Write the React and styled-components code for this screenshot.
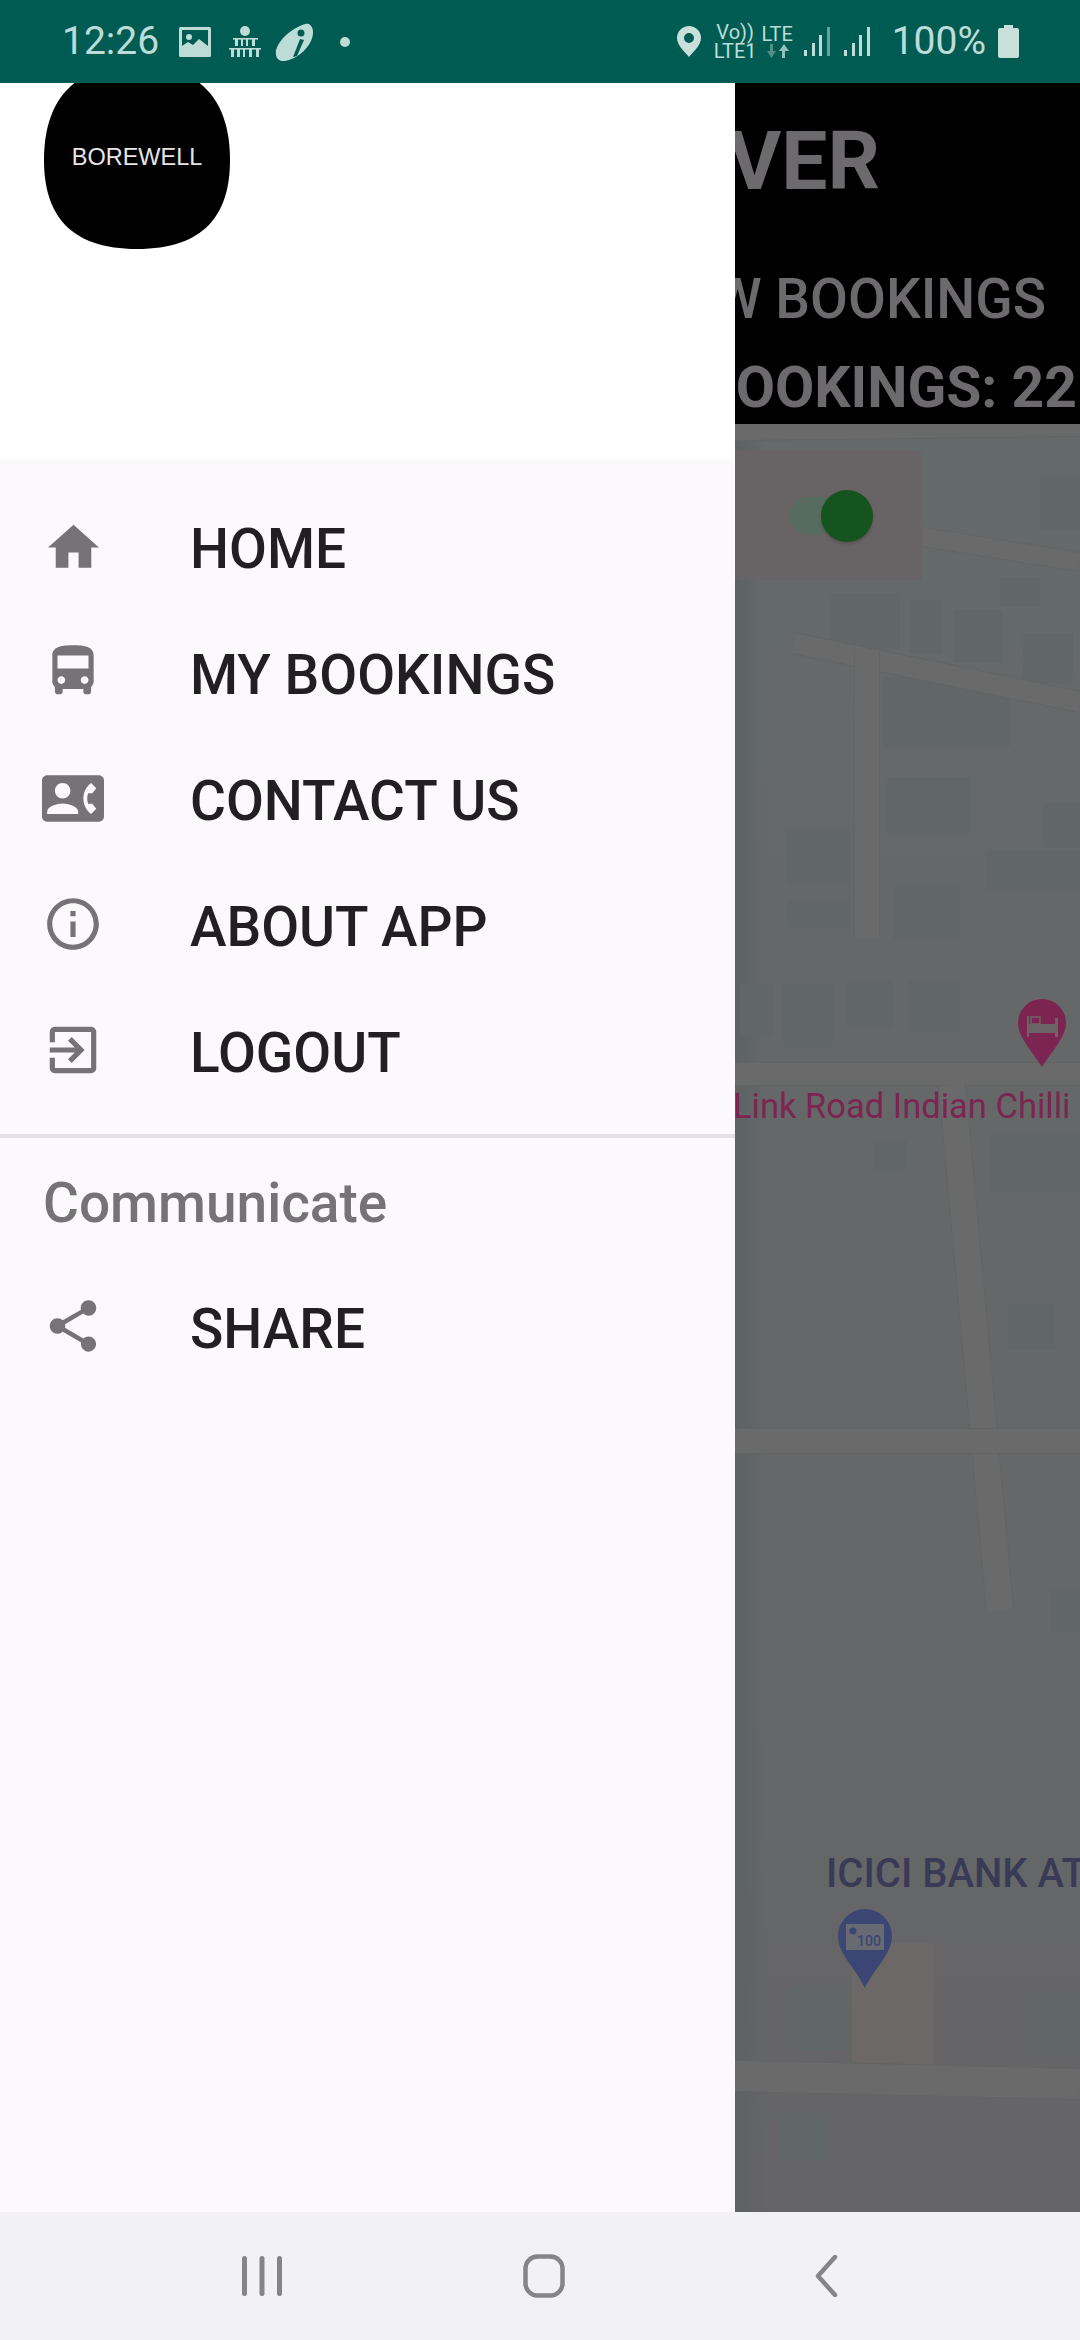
import React from 'react';
import styled, { createGlobalStyle } from 'styled-components';

const GlobalStyle = createGlobalStyle`
  html, body {
    margin: 0;
    padding: 0;
    background: #f2f1f4;
  }
  body {
    font-family: Roboto, "Liberation Sans", sans-serif;
  }
  * {
    box-sizing: border-box;
  }
`;

const Phone = styled.div`
  width: 1080px;
  height: 2340px;
  display: flex;
  flex-direction: column;
  overflow: hidden;
`;

/* status bar */
const StatusBar = styled.header`
  height: 83px;
  flex: none;
  background: #005c53;
  color: #bddcd8;
  display: flex;
  align-items: center;
  justify-content: space-between;
  padding: 0 61px 0 62px;
`;
const StatusGroup = styled.div`
  display: flex;
  align-items: center;
`;
const StatusText = styled.span`
  font-size: 39px;
  line-height: 39px;
  margin-right: ${p => p.$after || 0}px;
`;
const Glyph = styled.svg`
  display: block;
  flex: none;
  margin-right: ${p => p.$after || 0}px;
`;
const NetStack = styled.div`
  display: flex;
  flex-direction: column;
  align-items: center;
  margin-right: ${p => p.$after || 0}px;
  width: ${p => p.$width}px;
`;
const NetLabel = styled.div`
  font-size: 20px;
  line-height: 19px;
  height: 19px;
  white-space: nowrap;
`;

/* body */
const Body = styled.div`
  flex: 1;
  min-height: 0;
  display: flex;
`;

/* drawer */
const Drawer = styled.aside`
  width: 735px;
  flex: none;
  background: #fbf9fc;
  display: flex;
  flex-direction: column;
  overflow: hidden;
`;
const DrawerHead = styled.div`
  height: 377px;
  flex: none;
  background: #ffffff;
  padding-left: 44px;
`;
const Logo = styled.div`
  width: 186px;
  height: 184px;
  margin-top: -18px;
  background: #000;
  color: #e6e6e6;
  clip-path: path('M93 0C165 0 186 45 186 95C186 150 160 184 93 184C26 184 0 150 0 95C0 45 21 0 93 0Z');
  display: flex;
  align-items: center;
  justify-content: center;
  font-family: "Liberation Sans", Arial, sans-serif;
  font-size: 23.5px;
`;
const Menu = styled.nav`
  padding-top: 26px;
  display: flex;
  flex-direction: column;
`;
const Item = styled.a`
  height: 126px;
  display: flex;
  align-items: center;
  padding-left: 42px;
  color: #211f22;
  text-decoration: none;
`;
const IconSlot = styled.span`
  width: 62px;
  flex: none;
  display: flex;
  justify-content: center;
  margin-right: 86px;
  color: #757376;
  transform: translateY(${p => p.$shift || 0}px);
`;
const ItemLabel = styled.span`
  font-size: 55px;
  font-weight: 500;
  line-height: 60px;
  white-space: nowrap;
`;
const Divider = styled.hr`
  height: 4px;
  margin: 18px 0 0;
  border: 0;
  background: #e3e2e5;
`;
const SectionTitle = styled.h2`
  margin: 0;
  height: 128px;
  display: flex;
  align-items: center;
  padding: 1px 0 0 43px;
  font-size: 55px;
  font-weight: 500;
  color: #757376;
`;

/* screen behind the drawer */
const Behind = styled.main`
  flex: 1;
  min-width: 0;
  display: flex;
  flex-direction: column;
  overflow: hidden;
`;
const AppHeader = styled.div`
  height: 341px;
  flex: none;
  background: #000;
  color: #6c6a6d;
  display: flex;
  flex-direction: column;
  padding-top: 28px;
`;
const HeaderLine = styled.div`
  display: flex;
  justify-content: flex-end;
  white-space: nowrap;
  font-size: ${p => p.$size}px;
  font-weight: ${p => p.$weight};
  height: ${p => p.$height}px;
  line-height: ${p => p.$height}px;
  padding-right: ${p => p.$right}px;
  margin-bottom: ${p => p.$below || 0}px;
`;
const MapArea = styled.div`
  position: relative;
  flex: 1;
  min-height: 0;
`;
const MapDrawing = styled.svg`
  display: block;
  width: 100%;
  height: 100%;
`;
const ToggleCard = styled.div`
  position: absolute;
  left: 0;
  top: 26px;
  width: 187px;
  height: 130px;
  background: #686465;
  display: flex;
  align-items: center;
  padding-left: 54px;
`;
const SwitchTrack = styled.div`
  position: relative;
  width: 72px;
  height: 37px;
  border-radius: 19px;
  background: #586b5f;
`;
const SwitchThumb = styled.div`
  position: absolute;
  right: -12px;
  top: -7px;
  width: 52px;
  height: 52px;
  border-radius: 50%;
  background: #16541f;
  box-shadow: 0 2px 3px rgba(60, 50, 40, 0.35);
`;

/* nav bar */
const NavBar = styled.footer`
  height: 128px;
  flex: none;
  background: #f2f1f4;
  display: grid;
  grid-template-columns: repeat(3, 282px);
  justify-content: center;
  align-items: center;
  padding: 0 0 0 8px;
  color: #858487;
`;
const NavSlot = styled.div`
  display: flex;
  justify-content: center;
`;

const MdIcon = ({ size = 62, d }) => (
  <svg width={size} height={size} viewBox="0 0 24 24" fill="currentColor" style={{ display: 'block' }}>
    <path d={d} />
  </svg>
);

const icons = {
  home: 'M10 20v-6h4v6h5v-8h3L12 3 2 12h3v8z',
  bus: 'M4 16c0 .88.39 1.67 1 2.22V20c0 .55.45 1 1 1h1c.55 0 1-.45 1-1v-1h8v1c0 .55.45 1 1 1h1c.55 0 1-.45 1-1v-1.78c.61-.55 1-1.34 1-2.22V6c0-3.5-3.58-4-8-4s-8 .5-8 4v10zm3.5 1c-.83 0-1.5-.67-1.5-1.5S6.67 14 7.5 14s1.5.67 1.5 1.5S8.33 17 7.5 17zm9 0c-.83 0-1.5-.67-1.5-1.5s.67-1.5 1.5-1.5 1.5.67 1.5 1.5-.67 1.5-1.5 1.5zm1.5-6H6V6h12v5z',
  contact: 'M22 3H2C.9 3 0 3.9 0 5v14c0 1.1.9 2 2 2h20c1.1 0 1.99-.9 1.99-2L24 5c0-1.1-.9-2-2-2zM8 6c1.66 0 3 1.34 3 3s-1.34 3-3 3-3-1.34-3-3 1.34-3 3-3zm6 12H2v-1c0-2 4-3.1 6-3.1s6 1.1 6 3.1v1zm3.85-4h1.64L21 16l-1.99 1.99c-1.31-.98-2.28-2.38-2.73-3.99-.18-.64-.28-1.31-.28-2s.1-1.36.28-2c.45-1.62 1.42-3.01 2.73-3.99L21 8l-1.51 2h-1.64c-.22.63-.35 1.3-.35 2s.13 1.37.35 2z',
  info: 'M11 7h2v2h-2zm0 4h2v6h-2zm1-9C6.48 2 2 6.48 2 12s4.48 10 10 10 10-4.48 10-10S17.52 2 12 2zm0 18c-4.41 0-8-3.59-8-8s3.59-8 8-8 8 3.59 8 8-3.59 8-8 8z',
  logout: 'M10.09 15.59L11.5 17l5-5-5-5-1.41 1.41L12.67 11H3v2h9.67l-2.58 2.59zM19 3H5c-1.11 0-2 .9-2 2v4h2V5h14v14H5v-4H3v4c0 1.1.89 2 2 2h14c1.1 0 2-.9 2-2V5c0-1.1-.9-2-2-2z',
  share: 'M18 16.08c-.76 0-1.44.3-1.96.77L8.91 12.7c.05-.23.09-.46.09-.7s-.04-.47-.09-.7l7.05-4.11c.54.5 1.25.81 2.04.81 1.66 0 3-1.34 3-3s-1.34-3-3-3-3 1.34-3 3c0 .24.04.47.09.7L8.04 9.81C7.5 9.31 6.79 9 6 9c-1.66 0-3 1.34-3 3s1.34 3 3 3c.79 0 1.5-.31 2.04-.81l7.12 4.16c-.05.21-.08.43-.08.65 0 1.61 1.31 2.92 2.92 2.92 1.61 0 2.92-1.31 2.92-2.92s-1.31-2.92-2.92-2.92z',
};

const menuItems = [
  { label: 'HOME', icon: 'home', size: 61, shift: -2 },
  { label: 'MY BOOKINGS', icon: 'bus', size: 64, shift: -4 },
  { label: 'CONTACT US', icon: 'contact', size: 63, shift: -3 },
  { label: 'ABOUT APP', icon: 'info', size: 62, shift: -3 },
  { label: 'LOGOUT', icon: 'logout', size: 62, shift: -3 },
];

const StatusIcons = {
  Picture: () => (
    <Glyph $after={17} width="32" height="30" viewBox="0 0 32 30">
      <rect width="32" height="30" rx="1.5" fill="#bddcd8" />
      <rect x="3" y="3" width="26" height="21" fill="#005c53" />
      <circle cx="10" cy="10" r="3" fill="#bddcd8" />
      <path d="M3 24v-5l6-4 5 3 6-6 9 7v5z" fill="#bddcd8" />
    </Glyph>
  ),
  Bhaskar: () => (
    <Glyph $after={13} width="34" height="34" viewBox="0 0 34 34" fill="#bddcd8">
      <circle cx="17" cy="6" r="5" />
      <rect x="5" y="13" width="25" height="1.6" />
      <path d="M7 14h3v7H7zM13 14h2v7h-2zM18 14h2v7h-2zM24 14h3v7h-3z" />
      <rect x="1" y="23" width="32" height="1.6" />
      <path d="M3 24h3v8H3zM9 24h3v8H9zM15 24h2v8h-2zM21 24h3v8h-3zM28 24h3v8h-3z" />
    </Glyph>
  ),
  Icici: () => (
    <Glyph $after={26} width="39" height="38" viewBox="0 0 39 38">
      <path d="M34 1c5 3 5 10 2 17C31 28 21 36 10 38 3 39 0 34 1 27 4 17 14 8 23 4c4-2 8-4 11-3z" fill="#bddcd8" />
      <circle cx="26" cy="10" r="3.500" fill="#005c53" />
      <path d="M25 16l-7 18 4-1 7-16z" fill="#005c53" />
    </Glyph>
  ),
  Dot: () => (
    <Glyph width="10" height="10" viewBox="0 0 10 10">
      <circle cx="5" cy="5" r="5" fill="#bddcd8" />
    </Glyph>
  ),
  Location: () => (
    <Glyph $after={15} width="24" height="31" viewBox="0 0 24 31">
      <path fillRule="evenodd" d="M12 0a12 12 0 0 1 12 12c0 7-7 13-12 19C7 25 0 19 0 12A12 12 0 0 1 12 0zm0 7a5 5 0 1 0 0 10 5 5 0 0 0 0-10z" fill="#c8dfdc" />
    </Glyph>
  ),
  Arrows: () => (
    <svg width="24" height="14" viewBox="0 0 24 14" style={{ display: 'block' }}>
      <path d="M5 0h3v7h3l-4.500 7L2 7h3z" fill="#4f8f85" />
      <path d="M17 14h3V7h4l-5-7-5 7h3z" fill="#8fc0b8" />
    </svg>
  ),
  Signal: ({ after, faded }) => (
    <Glyph $after={after} width="27" height="29" viewBox="0 0 27 29" fill="#bddcd8">
      <rect x="0" y="23" width="3" height="6" />
      <rect x="8" y="16" width="3" height="13" />
      <rect x="15" y="8" width="3" height="21" />
      <rect x="23" y="0" width="3" height="29" opacity={faded ? 0.55 : 1} />
    </Glyph>
  ),
  Battery: () => (
    <Glyph width="21" height="33" viewBox="0 0 21 33">
      <path d="M6 0h9v3h4a2 2 0 0 1 2 2v26a2 2 0 0 1-2 2H2a2 2 0 0 1-2-2V5a2 2 0 0 1 2-2h4z" fill="#c8dfdc" />
    </Glyph>
  ),
};

const roads = [
  { d: 'M735 432 L1080 428', w: 16 },
  { d: 'M793 643 L1080 702', w: 20 },
  { d: 'M923 537 L1080 562', w: 18 },
  { d: 'M867 650 L867 938', w: 24 },
  { d: 'M735 1074 L1080 1074', w: 22 },
  { d: 'M952 1085 L1000 1610', w: 26 },
  { d: 'M735 1441 L1080 1441', w: 24 },
  { d: 'M735 2076 L1080 2084', w: 30 },
];

const buildings = [
  [830, 593, 70, 57], [910, 600, 33, 53], [953, 610, 50, 53], [1023, 633, 50, 50],
  [1040, 477, 40, 53], [1000, 577, 40, 30], [883, 677, 127, 70], [887, 777, 83, 56],
  [787, 830, 63, 53], [787, 900, 63, 27], [893, 883, 67, 57], [987, 850, 93, 40],
  [1043, 803, 37, 44], [783, 983, 50, 64], [847, 980, 46, 47], [908, 980, 52, 53],
  [740, 983, 33, 54], [873, 1140, 34, 33], [990, 1133, 90, 60], [1008, 1303, 47, 47],
  [1050, 1590, 30, 43], [790, 1987, 58, 63], [1033, 1993, 47, 64], [780, 2113, 50, 47],
];

const MapPicture = () => (
  <MapDrawing viewBox="735 424 345 1788" preserveAspectRatio="none">
    <defs>
      <linearGradient id="ground" x1="0" y1="0" x2="0" y2="1">
        <stop offset="0" stopColor="#646a6a" />
        <stop offset="0.25" stopColor="#656868" />
        <stop offset="0.7" stopColor="#656768" />
        <stop offset="1" stopColor="#656466" />
      </linearGradient>
      <linearGradient id="edge" x1="0" y1="0" x2="1" y2="0">
        <stop offset="0" stopColor="#5c6262" />
        <stop offset="1" stopColor="#5c6262" stopOpacity="0" />
      </linearGradient>
    </defs>
    <rect x="735" y="424" width="345" height="1788" fill="url(#ground)" />
    <rect x="735" y="424" width="30" height="1788" fill="url(#edge)" />
    {buildings.map(([x, y, w, h]) => (
      <rect key={`${x}-${y}`} x={x} y={y} width={w} height={h} fill="#616767" />
    ))}
    <rect x="852" y="1943" width="81" height="130" fill="#6c6866" />
    {roads.map(r => (
      <g key={r.d} fill="none">
        <path d={r.d} stroke="#626465" strokeWidth={r.w + 2} />
        <path d={r.d} stroke="#6a6a6b" strokeWidth={r.w} />
      </g>
    ))}

    <path d="M1042 999a24 24 0 0 1 24 24c0 14-14 28-24 44-10-16-24-30-24-44a24 24 0 0 1 24-24z" fill="#7c2550" />
    <path d="M1027 1016h2v8h26v-6h3v19h-3v-4h-26v4h-2z" fill="#6d6468" />
    <rect x="1031" y="1017" width="9" height="7" fill="none" stroke="#6d6468" strokeWidth="1.5" />
    <text x="733" y="1118" fontFamily="Roboto, sans-serif" fontSize="34.500" fill="#7c2550">Link Road Indian Chilli</text>

    <text x="826" y="1887" fontFamily="Roboto, sans-serif" fontSize="40" fontWeight="500" fill="#383a56">ICICI BANK ATM</text>
    <path d="M865 1909a27 27 0 0 1 27 27c0 18-17 31-27 52-10-21-27-34-27-52a27 27 0 0 1 27-27z" fill="#3c4674" />
    <rect x="846" y="1924" width="38" height="26" fill="#676a72" />
    <circle cx="853" cy="1931" r="3.500" fill="#3c4674" />
    <text x="857" y="1946" fontFamily="Roboto, sans-serif" fontSize="14" fontWeight="500" fill="#3c4674">100</text>
  </MapDrawing>
);

const App = () => (
  <Phone>
    <GlobalStyle />
    <StatusBar>
      <StatusGroup>
        <StatusText $after={20}>12:26</StatusText>
        <StatusIcons.Picture />
        <StatusIcons.Bhaskar />
        <StatusIcons.Icici />
        <StatusIcons.Dot />
      </StatusGroup>
      <StatusGroup>
        <StatusIcons.Location />
        <NetStack $width={39} $after={7}>
          <NetLabel>Vo))</NetLabel>
          <NetLabel>LTE1</NetLabel>
        </NetStack>
        <NetStack $width={31} $after={11}>
          <NetLabel>LTE</NetLabel>
          <StatusIcons.Arrows />
        </NetStack>
        <StatusIcons.Signal after={13} faded />
        <StatusIcons.Signal after={21} />
        <StatusText $after={12}>100%</StatusText>
        <StatusIcons.Battery />
      </StatusGroup>
    </StatusBar>

    <Body>
      <Drawer>
        <DrawerHead>
          <Logo>BOREWELL</Logo>
        </DrawerHead>
        <Menu>
          {menuItems.map(item => (
            <Item key={item.label}>
              <IconSlot $shift={item.shift}>
                <MdIcon size={item.size} d={icons[item.icon]} />
              </IconSlot>
              <ItemLabel>{item.label}</ItemLabel>
            </Item>
          ))}
        </Menu>
        <Divider />
        <SectionTitle>Communicate</SectionTitle>
        <Item>
          <IconSlot $shift={-3}>
            <MdIcon d={icons.share} />
          </IconSlot>
          <ItemLabel>SHARE</ItemLabel>
        </Item>
      </Drawer>

      <Behind>
        <AppHeader>
          <HeaderLine $size={82} $weight={700} $height={100} $right={200} $below={56}>DRIVER</HeaderLine>
          <HeaderLine $size={55} $weight={500} $height={64} $right={34} $below={25}>NEW BOOKINGS</HeaderLine>
          <HeaderLine $size={57} $weight={700} $height={64} $right={3}>TOTAL BOOKINGS: 22</HeaderLine>
        </AppHeader>
        <MapArea>
          <MapPicture />
          <ToggleCard>
            <SwitchTrack>
              <SwitchThumb />
            </SwitchTrack>
          </ToggleCard>
        </MapArea>
      </Behind>
    </Body>

    <NavBar>
      <NavSlot>
        <svg width="42" height="42" viewBox="0 0 42 42" fill="currentColor">
          <rect x="1" y="1" width="5" height="40" rx="2.500" />
          <rect x="18.500" y="1" width="5" height="40" rx="2.500" />
          <rect x="36" y="1" width="5" height="40" rx="2.500" />
        </svg>
      </NavSlot>
      <NavSlot>
        <svg width="42" height="44" viewBox="0 0 42 44" fill="none" stroke="currentColor" strokeWidth="4.500">
          <rect x="2.500" y="2.500" width="37" height="39" rx="12" />
        </svg>
      </NavSlot>
      <NavSlot>
        <svg width="24" height="42" viewBox="0 0 24 42" fill="none" stroke="currentColor" strokeWidth="4.500" strokeLinecap="round" strokeLinejoin="round">
          <path d="M21 2 L4 21 L21 40" />
        </svg>
      </NavSlot>
    </NavBar>
  </Phone>
);

export default App;
